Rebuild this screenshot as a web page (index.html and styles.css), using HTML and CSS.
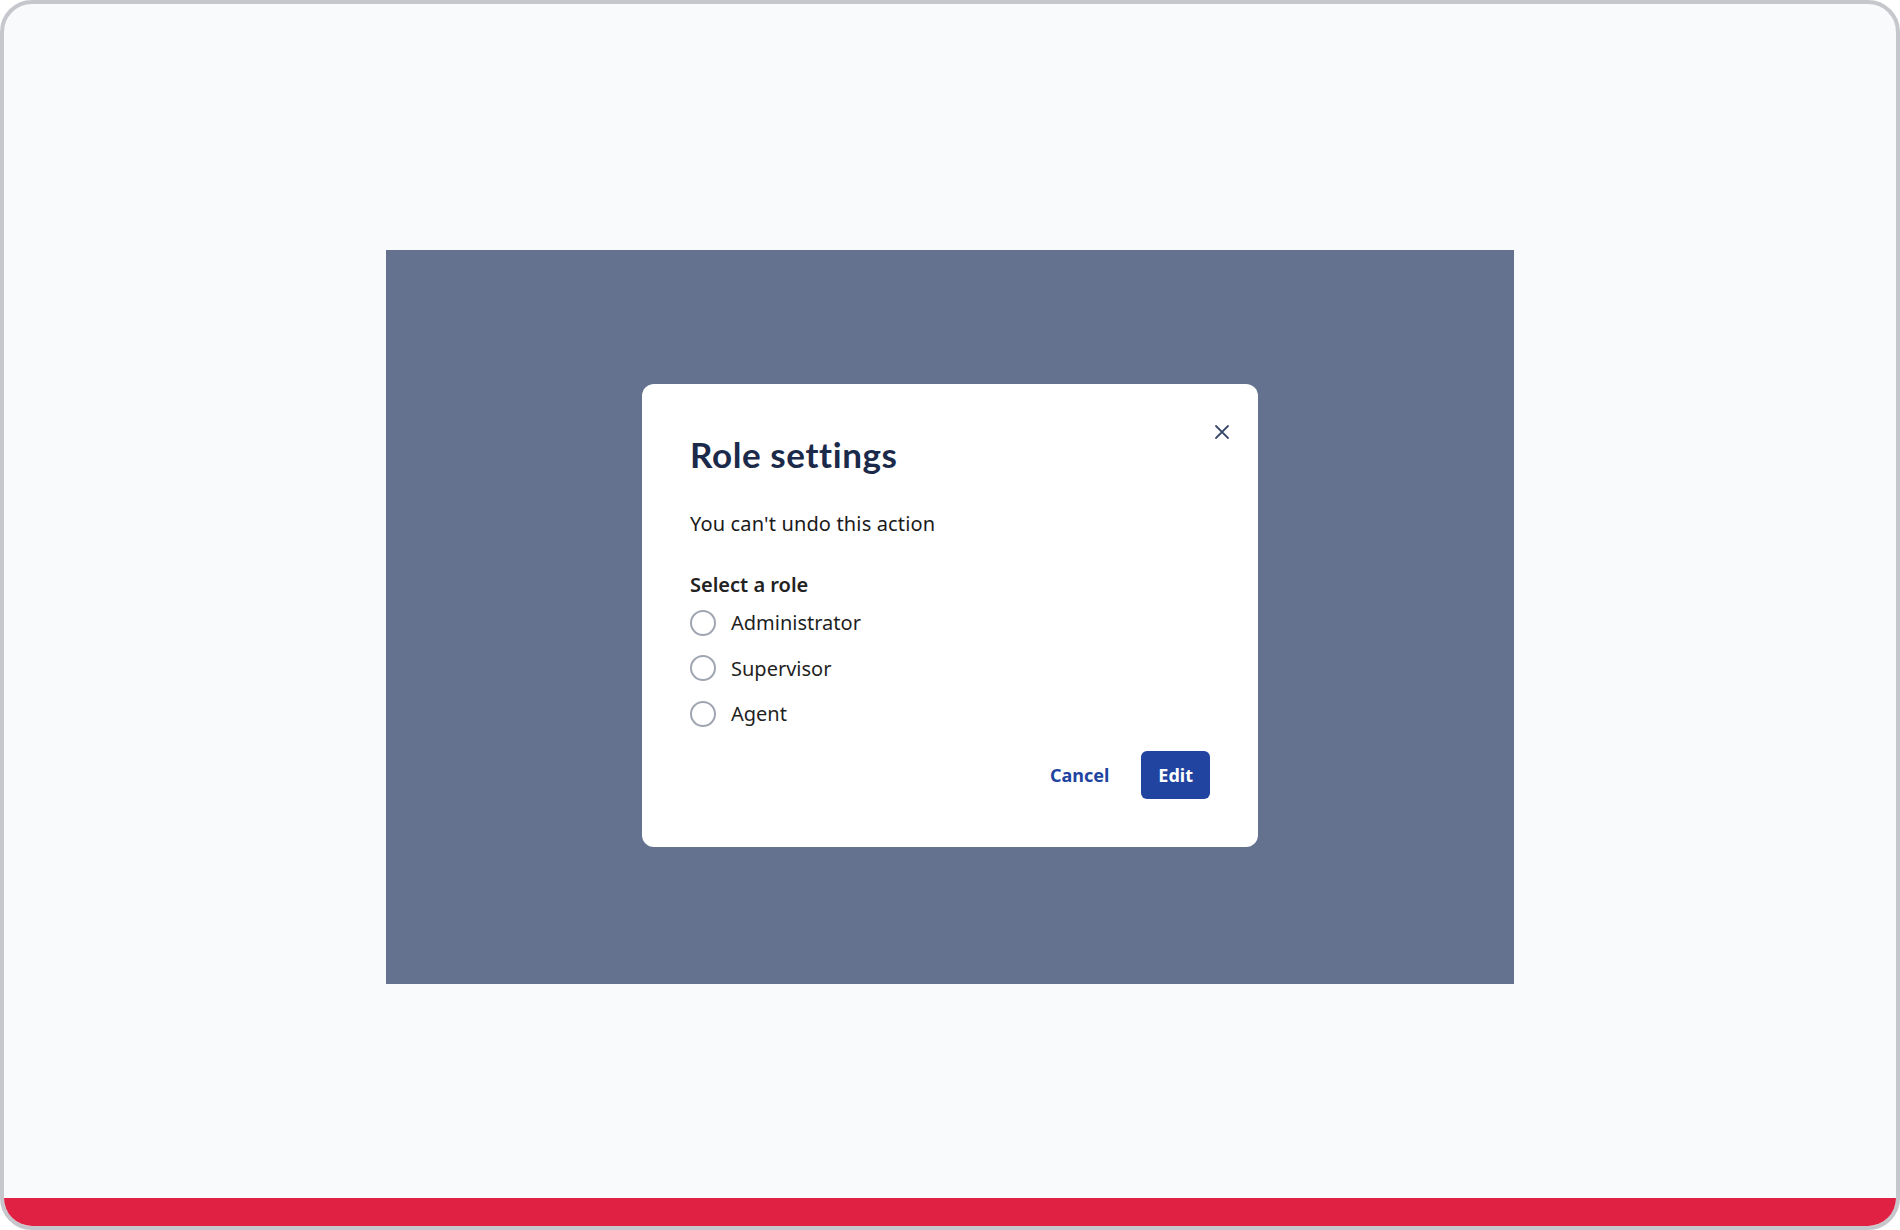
FILE: index.html
```html
<!DOCTYPE html>
<html lang="en">
<head>
<meta charset="utf-8">
<title>Role settings</title>
<link rel="stylesheet" href="styles.css">
</head>
<body>
<div class="frame">
  <main class="stage">
    <div class="overlay">
      <section class="modal" role="dialog" aria-labelledby="modal-title">
        <button class="close" aria-label="Close">
          <svg width="16" height="16" viewBox="0 0 16 16" aria-hidden="true">
            <path d="M2 2 L14 14 M14 2 L2 14" stroke="#3b4a6b" stroke-width="1.8" stroke-linecap="round" fill="none"/>
          </svg>
        </button>
        <h1 class="title" id="modal-title">Role settings</h1>
        <p class="desc">You can't undo this action</p>
        <fieldset class="roles">
          <legend class="roles-label">Select a role</legend>
          <div class="radio-list">
            <label class="radio"><span class="dot"></span><span>Administrator</span></label>
            <label class="radio"><span class="dot"></span><span>Supervisor</span></label>
            <label class="radio"><span class="dot"></span><span>Agent</span></label>
          </div>
        </fieldset>
        <div class="actions">
          <button class="btn-text">Cancel</button>
          <button class="btn-primary">Edit</button>
        </div>
      </section>
    </div>
  </main>
  <div class="bar"></div>
</div>
</body>
</html>
```

FILE: styles.css
```css
* { box-sizing: border-box; }

html, body {
  margin: 0;
  padding: 0;
  background: #ffffff;
}

.frame {
  width: 1900px;
  height: 1230px;
  border: 4px solid #c6c7cc;
  border-radius: 32px;
  overflow: hidden;
  background: #f9fafc;
  display: flex;
  flex-direction: column;
}

.stage {
  flex: 1;
  display: flex;
  justify-content: center;
  align-items: flex-start;
  padding-top: 246px;
}

.overlay {
  width: 1128px;
  height: 734px;
  background: #647290;
  display: flex;
  align-items: center;
  justify-content: center;
}

.modal {
  position: relative;
  width: 616px;
  margin-bottom: 3px;
  background: #ffffff;
  border-radius: 12px;
  padding: 50px 48px 48px 48px;
  font-family: "Noto Sans", "Open Sans", sans-serif;
  color: #1a1a1a;
}

.close {
  position: absolute;
  top: 36px;
  right: 24px;
  width: 24px;
  height: 24px;
  padding: 0;
  border: 0;
  background: transparent;
  display: flex;
  align-items: center;
  justify-content: center;
  cursor: pointer;
}

.title {
  margin: 0;
  font-family: Lato, "Noto Sans", sans-serif;
  font-weight: 700;
  font-size: 35px;
  line-height: 40px;
  color: #1b2a4a;
  letter-spacing: 0.6px;
}

.desc {
  margin: 36px 0 0 0;
  font-size: 20px;
  line-height: 28px;
  letter-spacing: 0.15px;
}

.roles {
  margin: 33px 0 0 0;
  padding: 0;
  border: 0;
}

.roles-label {
  padding: 0;
  font-size: 20px;
  font-weight: 600;
  line-height: 28px;
  color: #222222;
}

.radio-list {
  display: flex;
  flex-direction: column;
  gap: 10.5px;
  margin-top: 6px;
}

.radio {
  display: flex;
  align-items: center;
  gap: 15px;
  height: 35px;
  font-size: 20px;
  color: #1f1f1f;
}

.dot {
  width: 26px;
  height: 26px;
  border: 2px solid #a0a5b2;
  border-radius: 50%;
  flex: none;
}

.actions {
  display: flex;
  justify-content: flex-end;
  align-items: center;
  gap: 32px;
  margin-top: 20px;
}

.btn-text {
  border: 0;
  background: transparent;
  padding: 0;
  font-family: "Noto Sans", sans-serif;
  font-weight: 700;
  font-size: 18px;
  color: #2144a0;
  cursor: pointer;
}

.btn-primary {
  height: 48px;
  padding: 0 17px;
  border: 0;
  border-radius: 6px;
  background: #2144a0;
  color: #ffffff;
  font-family: "Noto Sans", sans-serif;
  font-weight: 700;
  font-size: 18px;
  cursor: pointer;
}

.bar {
  height: 28px;
  background: #e02143;
  flex: none;
}
```
